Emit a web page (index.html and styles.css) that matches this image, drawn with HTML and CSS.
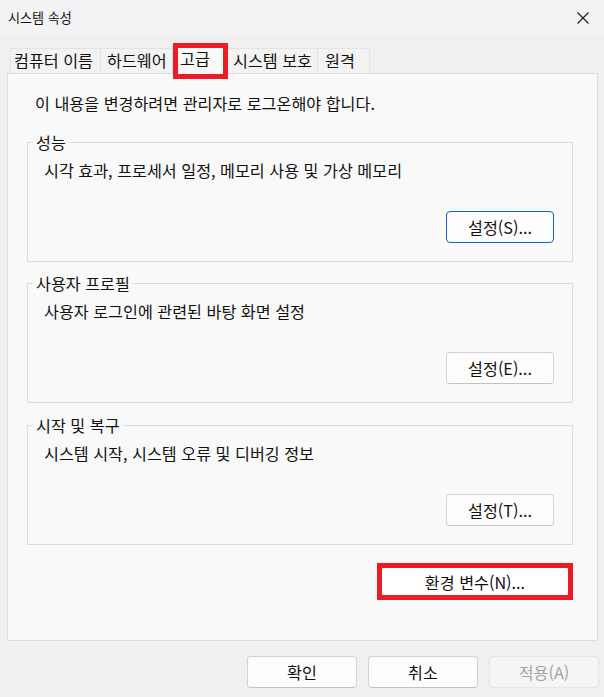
FILE: index.html
```html
<!DOCTYPE html>
<html lang="ko">
<head>
<meta charset="utf-8">
<title>시스템 속성</title>
<link rel="stylesheet" href="styles.css">
</head>
<body>
<div class="window">
  <header class="titlebar">
    <span class="title">시스템 속성</span>
    <span class="close" aria-label="닫기">
      <svg width="14" height="14" viewBox="0 0 14 14"><path d="M1.5 1.5 L12.5 12.5 M12.5 1.5 L1.5 12.5" stroke="#1b1b1b" stroke-width="1.1" fill="none"/></svg>
    </span>
  </header>
  <nav class="tabs">
    <div class="tab tab-name">컴퓨터 이름</div>
    <div class="tab tab-hw">하드웨어</div>
    <div class="tab tab-adv is-active">고급<span class="annot"></span></div>
    <div class="tab tab-prot">시스템 보호</div>
    <div class="tab tab-remote">원격</div>
  </nav>
  <section class="panel">
    <p class="intro">이 내용을 변경하려면 관리자로 로그온해야 합니다.</p>
    <fieldset class="group">
      <legend>성능</legend>
      <p class="group-text">시각 효과, 프로세서 일정, 메모리 사용 및 가상 메모리</p>
      <div class="group-actions"><button class="btn btn-set btn-default">설정(S)...</button></div>
    </fieldset>
    <fieldset class="group">
      <legend>사용자 프로필</legend>
      <p class="group-text">사용자 로그인에 관련된 바탕 화면 설정</p>
      <div class="group-actions"><button class="btn btn-set">설정(E)...</button></div>
    </fieldset>
    <fieldset class="group group-last">
      <legend>시작 및 복구</legend>
      <p class="group-text">시스템 시작, 시스템 오류 및 디버깅 정보</p>
      <div class="group-actions"><button class="btn btn-set">설정(T)...</button></div>
    </fieldset>
    <div class="panel-actions"><button class="btn btn-env">환경 변수(N)...</button></div>
  </section>
  <footer class="dialog-actions">
    <button class="btn btn-dlg">확인</button>
    <button class="btn btn-dlg">취소</button>
    <button class="btn btn-dlg btn-disabled">적용(A)</button>
  </footer>
</div>
</body>
</html>
```
FILE: styles.css
```css
* { box-sizing: border-box; }
html, body { margin: 0; padding: 0; }
body {
  width: 604px;
  height: 697px;
  overflow: hidden;
  background: #f0f0f0;
  font-family: "Noto Sans CJK KR", "Noto Sans", sans-serif;
  font-size: 16.2px;
  line-height: 20px;
  color: #111111;
}
.window { width: 604px; height: 697px; }

.titlebar {
  height: 36px;
  background: #f3f3f6;
  display: flex;
  align-items: center;
  justify-content: space-between;
  padding-left: 8px;
}
.title { font-size: 13.1px; line-height: 20px; }
.close { width: 14px; height: 14px; margin-right: 14px; display: flex; }

.tabs {
  position: relative;
  z-index: 1;
  height: 38px;
  margin-bottom: -1px;
  padding-left: 10px;
  display: flex;
  align-items: flex-end;
}
.tab {
  height: 26px;
  border: 1px solid #e3e3e3;
  border-bottom-color: #dcdcdc;
  background: #f3f3f3;
  padding-left: 5px;
  line-height: 22px;
  white-space: nowrap;
  margin-left: -1px;
}
.tab:first-child { margin-left: 0; }
.tab-name { width: 91px; padding-left: 3px; }
.tab-hw { width: 73px; padding-left: 6px; }
.tab-adv { width: 56px; }
.tab-prot { width: 91px; padding-left: 5px; }
.tab-remote { width: 53px; padding-left: 7px; }
.tab.is-active {
  position: relative;
  height: 30px;
  background: #f9f9f9;
  border-bottom: none;
  padding-left: 7px;
  line-height: 26px;
  z-index: 2;
}
.annot {
  position: absolute;
  left: 0;
  top: -2px;
  width: 55px;
  height: 36px;
  border: 5px solid #ed1c24;
}

.panel {
  margin: 0 6px 0 7px;
  border: 1px solid #dcdcdc;
  background: #f9f9f9;
  padding: 19px 24px 40px 19px;
}
.intro { margin: 0 0 0 8px; }

.group {
  margin: 19px 0 0;
  padding: 0 18px 18px 16px;
  border: 1px solid #dcdcdc;
  min-width: 0;
}
.group + .group { margin-top: 11px; }
.group-last { margin-top: 12px !important; }
.group legend {
  padding: 0 3px;
  margin-left: -11px;
  line-height: 20px;
}
.group-text { margin: 8px 0 0; }
.group-actions {
  display: flex;
  justify-content: flex-end;
  margin-top: 31px;
}

.btn {
  font-family: inherit;
  font-size: 16.2px;
  line-height: 20px;
  color: #111111;
  background: #fdfdfd;
  border: 1px solid #d3d3d3;
  border-bottom-color: #c2c2c2;
  border-radius: 4px;
  padding: 0;
  margin: 0;
  text-align: center;
}
.btn-set { width: 108px; height: 32px; }
.btn-default { border-color: #0a66c2; }

.panel-actions {
  display: flex;
  justify-content: flex-end;
  margin-top: 18px;
}
.btn-env {
  width: 196px;
  height: 37px;
  background: #ffffff;
  border: 5px solid #ed1c24;
  border-radius: 0;
}

.dialog-actions {
  display: flex;
  justify-content: flex-end;
  gap: 11px;
  padding-right: 5px;
  margin-top: 15px;
}
.btn-dlg { width: 110px; height: 32px; }
.btn-disabled {
  background: #f5f5f5;
  border-color: #e5e5e5;
  color: #a0a4a8;
}
```
